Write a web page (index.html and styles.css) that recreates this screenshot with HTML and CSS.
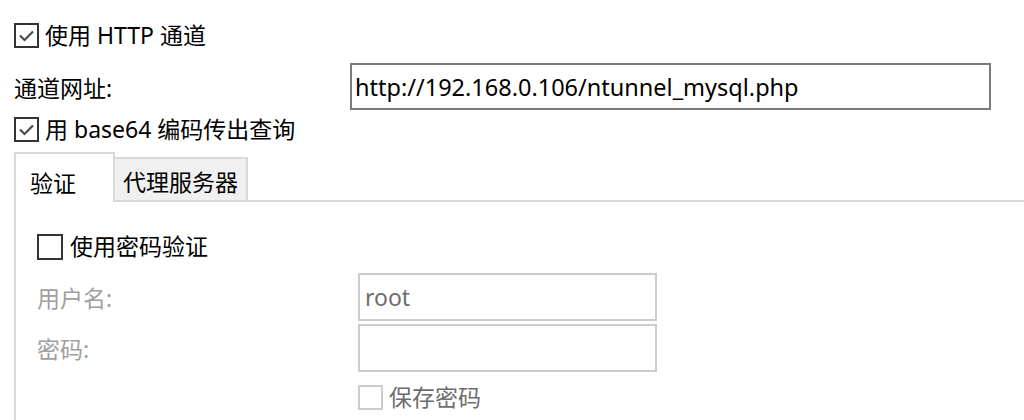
FILE: index.html
```html
<!DOCTYPE html>
<html lang="zh-CN">
<head>
<meta charset="utf-8">
<link rel="stylesheet" href="styles.css">
</head>
<body>
<div class="page">
  <div class="check row-http">
    <span class="box"><svg viewBox="0 0 21 21" width="21" height="21"><path d="M4 10.5 L8.5 15 L17 6.5" fill="none" stroke="#4a4a4a" stroke-width="2.2"/></svg></span>
    <span class="text">使用 HTTP 通道</span>
  </div>
  <div class="field row-url">
    <span class="label url-label">通道网址:</span>
    <div class="input url-input">http://192.168.0.106/ntunnel_mysql.php</div>
  </div>
  <div class="check row-base64">
    <span class="box"><svg viewBox="0 0 21 21" width="21" height="21"><path d="M4 10.5 L8.5 15 L17 6.5" fill="none" stroke="#4a4a4a" stroke-width="2.2"/></svg></span>
    <span class="text">用 base64 编码传出查询</span>
  </div>
  <div class="tabs">
    <div class="tab active">验证</div>
    <div class="tab">代理服务器</div>
  </div>
  <div class="panel">
    <div class="check row-pwd">
      <span class="box"></span>
      <span class="text">使用密码验证</span>
    </div>
    <div class="field row-user">
      <span class="label dim">用户名:</span>
      <div class="input disabled">root</div>
    </div>
    <div class="field row-pass">
      <span class="label dim">密码:</span>
      <div class="input disabled"></div>
    </div>
    <div class="check disabled-check row-save">
      <span class="box"></span>
      <span class="text">保存密码</span>
    </div>
  </div>
</div>
</body>
</html>
```
FILE: styles.css
```css
html, body {
  margin: 0;
  padding: 0;
  background: #ffffff;
}
body {
  font-family: "Noto Sans", "Noto Sans CJK SC", sans-serif;
  font-size: 23px;
  color: #000;
  overflow: hidden;
  height: 420px;
}
.page {
  padding-left: 14px;
  padding-top: 23px;
}
.check {
  display: flex;
  align-items: center;
  height: 25px;
  line-height: 1;
}
.box {
  box-sizing: border-box;
  flex-shrink: 0;
  width: 25px;
  height: 25px;
  border: 2px solid #333333;
  display: flex;
  align-items: center;
  justify-content: center;
  margin-right: 6px;
  background: #fff;
}
.field {
  display: flex;
  align-items: center;
}
.row-url {
  margin-top: 15px;
  height: 47px;
}
.label {
  flex-shrink: 0;
  width: 321px;
}
.label.url-label {
  width: 336px;
}
.input {
  box-sizing: border-box;
  flex-shrink: 0;
  height: 47px;
  border: 2px solid #7a7a7a;
  display: flex;
  align-items: center;
  padding-left: 3px;
  white-space: nowrap;
}
.url-input {
  width: 641px;
  font-size: 23.5px;
}
.row-base64 {
  margin-top: 7px;
}
.tabs {
  margin-top: 10px;
  height: 48px;
  border-bottom: 2px solid #d9d9d9;
  display: flex;
  align-items: flex-start;
}
.tab {
  box-sizing: border-box;
  height: 45px;
  margin-top: 5px;
  border: 2px solid #d9d9d9;
  border-left: none;
  background: #f0f0f0;
  padding: 2px 8px 0 8px;
  display: flex;
  align-items: center;
}
.tab.active {
  height: 50px;
  margin-top: 0;
  width: 101px;
  border: 2px solid #d9d9d9;
  border-bottom: none;
  background: #fff;
  padding: 11px 0 0 14px;
  align-items: flex-start;
  position: relative;
  z-index: 1;
}
.panel {
  border-left: 2px solid #d9d9d9;
  height: 218px;
  box-sizing: border-box;
  padding: 32px 0 0 21px;
}
.row-pwd .box {
  width: 26px;
  height: 26px;
  margin-right: 7px;
}
.dim {
  color: #a0a0a0;
}
.input.disabled {
  border-color: #cccccc;
  color: #6d6d6d;
  width: 299px;
  height: 48px;
  padding-left: 5px;
}
.row-user {
  margin-top: 14px;
}
.row-pass {
  margin-top: 3px;
}
.row-save {
  margin-top: 13px;
  margin-left: 321px;
  height: 24px;
}
.disabled-check .box {
  border-color: #cccccc;
  width: 25px;
  height: 25px;
}
.disabled-check .text {
  color: #6d6d6d;
}
```
